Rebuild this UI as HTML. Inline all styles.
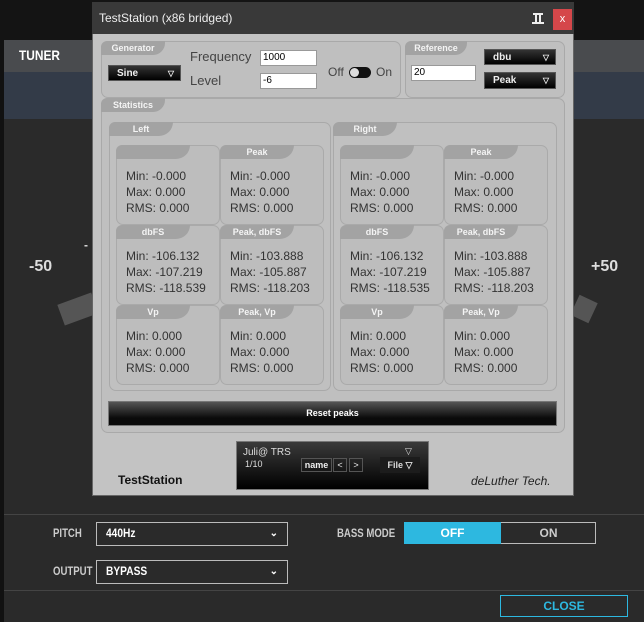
<!DOCTYPE html>
<html><head><meta charset="utf-8"><style>
*{margin:0;padding:0;box-sizing:border-box}
body{width:644px;height:622px;background:#2a2a2a;position:relative;overflow:hidden;font-family:"Liberation Sans",sans-serif}
.a{position:absolute}
.box{position:absolute;border:1px solid #a9a9a9;border-radius:7px;background:#bfbfbf}
.tab{position:absolute;left:-1px;top:-1px;height:14px;background:#a3a3a3;border-radius:6px 0 12px 0;color:#f4f4f4;font-weight:bold;font-size:9px;line-height:14px;text-align:center}
.sb{position:absolute;border:1px solid #aaa;border-radius:7px;background:#bdbdbd;width:104px;height:80px}
.sb .tab{width:74px;border-radius:6px 0 14px 0}
.v{position:absolute;left:9px;top:22px;font-size:12px;line-height:16px;color:#333}
.dd{position:absolute;background:linear-gradient(#333,#000);color:#eee;font-size:10px;font-weight:bold;line-height:16px;padding-left:8px;border:1px solid #555}
.dd i{position:absolute;right:6px;font-style:normal;font-size:8px}
.inp{position:absolute;background:#fff;border:1px solid #999;font-size:10px;line-height:14px;padding-left:2px;color:#000}
.lbl{position:absolute;font-size:13px;color:#444}
.bl{position:absolute;color:#ccc;font-weight:bold;font-size:12px;transform:scaleX(0.8);transform-origin:left center;white-space:nowrap}
.sel{position:absolute;border:1px solid #bbb;color:#fff;font-weight:bold;font-size:12px;line-height:21px;padding-left:9px}
.sel span{display:inline-block;transform:scaleX(0.85);transform-origin:left center}
.sel i{position:absolute;right:9px;font-style:normal;font-size:10px}
</style></head><body>
<div class="a" style="left:0;top:0;width:644px;height:40px;background:#141414"></div>
<div class="a" style="left:0;top:40px;width:4px;height:582px;background:#111"></div>
<div class="a" style="left:4px;top:40px;width:640px;height:32px;background:#494b4e"></div>
<div class="a" style="left:4px;top:72px;width:640px;height:47px;background:#333b48"></div>
<div class="a" style="left:19px;top:47px;color:#fff;font-weight:bold;font-size:14px;transform:scaleX(0.85);transform-origin:left">TUNER</div>
<div class="a" style="left:29px;top:258px;color:#ddd;font-weight:bold;font-size:16px">-50</div>
<div class="a" style="left:591px;top:258px;color:#ddd;font-weight:bold;font-size:16px">+50</div>
<div class="a" style="left:84px;top:238px;color:#ddd;font-weight:bold;font-size:12px">-</div>
<div class="a" style="left:60px;top:298px;width:36px;height:22px;background:#555;transform:rotate(-20deg)"></div>
<div class="a" style="left:574px;top:298px;width:20px;height:22px;background:#555;transform:rotate(25deg)"></div>
<div class="a" style="left:4px;top:514px;width:640px;height:1px;background:#444"></div>
<div class="a" style="left:4px;top:590px;width:640px;height:1px;background:#444"></div>
<div class="bl" style="left:53px;top:526px">PITCH</div>
<div class="sel" style="left:96px;top:522px;width:192px;height:24px"><span>440Hz</span><i>&#8964;</i></div>
<div class="bl" style="left:337px;top:526px">BASS MODE</div>
<div class="a" style="left:404px;top:522px;width:192px;height:22px;border:1px solid #bbb"></div>
<div class="a" style="left:404px;top:522px;width:97px;height:22px;background:#2db8e0;color:#fff;font-weight:bold;font-size:12px;line-height:22px;text-align:center">OFF</div>
<div class="a" style="left:501px;top:522px;width:95px;height:22px;color:#ccc;font-weight:bold;font-size:12px;line-height:22px;text-align:center">ON</div>
<div class="bl" style="left:53px;top:564px">OUTPUT</div>
<div class="sel" style="left:96px;top:560px;width:192px;height:24px"><span>BYPASS</span><i>&#8964;</i></div>
<div class="a" style="left:500px;top:595px;width:128px;height:22px;border:1px solid #2db8e0;color:#2db8e0;font-weight:bold;font-size:12px;line-height:20px;text-align:center">CLOSE</div>

<div class="a" style="left:92px;top:2px;width:482px;height:494px;background:#c3c3c3;border:1px solid #666"></div>
<div class="a" style="left:92px;top:2px;width:482px;height:32px;background:#393939"></div>
<div class="a" style="left:99px;top:11px;color:#eee;font-size:12px">TestStation (x86 bridged)</div>
<div class="a" style="left:533px;top:13px;width:10px;height:2px;background:#eee"></div>
<div class="a" style="left:535px;top:15px;width:2px;height:7px;background:#eee"></div>
<div class="a" style="left:539px;top:15px;width:2px;height:7px;background:#eee"></div>
<div class="a" style="left:532px;top:22px;width:12px;height:2px;background:#eee"></div>
<div class="a" style="left:553px;top:9px;width:19px;height:21px;background:#d5474a;color:#fff;font-size:11px;line-height:20px;text-align:center">x</div>

<div class="box" style="left:101px;top:41px;width:300px;height:57px"><div class="tab" style="width:64px">Generator</div></div>
<div class="dd" style="left:108px;top:65px;width:73px;height:16px">Sine<i>&#9661;</i></div>
<div class="lbl" style="left:190px;top:49px">Frequency</div>
<div class="lbl" style="left:190px;top:73px">Level</div>
<div class="inp" style="left:260px;top:50px;width:57px;height:16px">1000</div>
<div class="inp" style="left:260px;top:73px;width:57px;height:16px">-6</div>
<div class="lbl" style="left:328px;top:65px;font-size:12px">Off</div>
<div class="a" style="left:349px;top:67px;width:22px;height:11px;border-radius:6px;background:#111"></div>
<div class="a" style="left:350px;top:68px;width:9px;height:9px;border-radius:50%;background:#ddd"></div>
<div class="lbl" style="left:376px;top:65px;font-size:12px">On</div>

<div class="box" style="left:405px;top:41px;width:160px;height:57px"><div class="tab" style="width:62px">Reference</div></div>
<div class="inp" style="left:411px;top:65px;width:65px;height:16px">20</div>
<div class="dd" style="left:484px;top:49px;width:72px;height:16px">dbu<i>&#9661;</i></div>
<div class="dd" style="left:484px;top:72px;width:72px;height:17px">Peak<i>&#9661;</i></div>

<div class="box" style="left:101px;top:98px;width:464px;height:335px"><div class="tab" style="width:64px">Statistics</div></div>
<div class="box" style="left:109px;top:122px;width:222px;height:269px;background:#c0c0c0"><div class="tab" style="width:64px;border-radius:6px 0 14px 0">Left</div></div>
<div class="box" style="left:333px;top:122px;width:224px;height:269px;background:#c0c0c0"><div class="tab" style="width:64px;border-radius:6px 0 14px 0">Right</div></div>

<div class="sb" style="left:116px;top:145px"><div class="tab"></div><div class="v">Min: -0.000<br>Max: 0.000<br>RMS: 0.000</div></div>
<div class="sb" style="left:220px;top:145px"><div class="tab">Peak</div><div class="v">Min: -0.000<br>Max: 0.000<br>RMS: 0.000</div></div>
<div class="sb" style="left:116px;top:225px"><div class="tab">dbFS</div><div class="v">Min: -106.132<br>Max: -107.219<br>RMS: -118.539</div></div>
<div class="sb" style="left:220px;top:225px"><div class="tab">Peak, dbFS</div><div class="v">Min: -103.888<br>Max: -105.887<br>RMS: -118.203</div></div>
<div class="sb" style="left:116px;top:305px"><div class="tab">Vp</div><div class="v">Min: 0.000<br>Max: 0.000<br>RMS: 0.000</div></div>
<div class="sb" style="left:220px;top:305px"><div class="tab">Peak, Vp</div><div class="v">Min: 0.000<br>Max: 0.000<br>RMS: 0.000</div></div>

<div class="sb" style="left:340px;top:145px"><div class="tab"></div><div class="v">Min: -0.000<br>Max: 0.000<br>RMS: 0.000</div></div>
<div class="sb" style="left:444px;top:145px"><div class="tab">Peak</div><div class="v">Min: -0.000<br>Max: 0.000<br>RMS: 0.000</div></div>
<div class="sb" style="left:340px;top:225px"><div class="tab">dbFS</div><div class="v">Min: -106.132<br>Max: -107.219<br>RMS: -118.535</div></div>
<div class="sb" style="left:444px;top:225px"><div class="tab">Peak, dbFS</div><div class="v">Min: -103.888<br>Max: -105.887<br>RMS: -118.203</div></div>
<div class="sb" style="left:340px;top:305px"><div class="tab">Vp</div><div class="v">Min: 0.000<br>Max: 0.000<br>RMS: 0.000</div></div>
<div class="sb" style="left:444px;top:305px"><div class="tab">Peak, Vp</div><div class="v">Min: 0.000<br>Max: 0.000<br>RMS: 0.000</div></div>

<div class="a" style="left:108px;top:401px;width:449px;height:25px;background:linear-gradient(#555,#0a0a0a 70%);border:1px solid #777;color:#fff;font-weight:bold;font-size:9px;line-height:23px;text-align:center">Reset peaks</div>

<div class="a" style="left:236px;top:441px;width:193px;height:49px;background:linear-gradient(#3a3a3a,#000);border:1px solid #777"></div>
<div class="a" style="left:243px;top:447px;color:#ddd;font-size:10px">Juli@ TRS</div>
<div class="a" style="left:245px;top:459px;color:#ddd;font-size:9px">1/10</div>
<div class="a" style="left:301px;top:458px;width:31px;height:14px;border:1px solid #555;color:#eee;font-size:9px;font-weight:bold;line-height:12px;text-align:center">name</div>
<div class="a" style="left:333px;top:458px;width:14px;height:14px;border:1px solid #555;color:#eee;font-size:9px;line-height:12px;text-align:center">&lt;</div>
<div class="a" style="left:349px;top:458px;width:14px;height:14px;border:1px solid #555;color:#eee;font-size:9px;line-height:12px;text-align:center">&gt;</div>
<div class="a" style="left:405px;top:446px;color:#ddd;font-size:9px">&#9661;</div>
<div class="a" style="left:380px;top:457px;width:40px;height:16px;background:#1c1c1c;color:#ddd;font-size:9px;font-weight:bold;line-height:16px;text-align:center">File &#9661;</div>
<div class="a" style="left:118px;top:473px;color:#111;font-weight:bold;font-size:12px">TestStation</div>
<div class="a" style="left:471px;top:474px;color:#222;font-style:italic;font-size:12px">deLuther Tech.</div>
</body></html>
